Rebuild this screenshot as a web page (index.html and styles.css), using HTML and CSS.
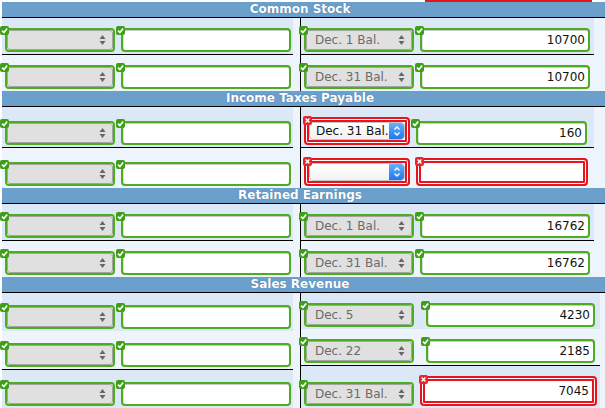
FILE: index.html
```html
<!DOCTYPE html>
<html lang="en">
<head>
    <meta charset="UTF-8">
    <title>T-Accounts</title>
    <link rel="stylesheet" href="styles.css">
</head>
<body>

    <svg width="0" height="0" class="defs">
        <symbol id="ok" viewBox="0 0 9 9">
            <rect width="9" height="9" rx="2" fill="#3e9e17"/>
            <path d="M2 4.6 L3.9 6.5 L7.2 2.4" fill="none" stroke="#fff" stroke-width="1.6"/>
        </symbol>
        <symbol id="bad" viewBox="0 0 9 9">
            <rect width="9" height="9" rx="2" fill="#e4272d"/>
            <path d="M2.6 2.6 L6.4 6.4 M6.4 2.6 L2.6 6.4" fill="none" stroke="#fff" stroke-width="1.4"/>
        </symbol>
        <symbol id="arrows" viewBox="0 0 7 12">
            <path d="M0.5 5 L3.5 1 L6.5 5 Z M0.5 7 L3.5 11 L6.5 7 Z" fill="#666"/>
        </symbol>
        <symbol id="chev" viewBox="0 0 8 12">
            <path d="M1.5 4.5 L4 2 L6.5 4.5 M1.5 7.5 L4 10 L6.5 7.5" fill="none" stroke="#fff" stroke-width="1.3"/>
        </symbol>
    </svg>

    <div class="prev"><div class="prev-bar"></div></div>

    <!-- Common Stock -->
    <div class="acct">
        <div class="head">Common Stock</div>
        <div class="body">
            <div class="col left">
                <div class="row line">
                    <div class="fld sel"><svg class="mark"><use href="#ok"/></svg><div class="pick"><span></span><svg class="arr"><use href="#arrows"/></svg></div></div>
                    <div class="fld txt"><svg class="mark"><use href="#ok"/></svg><div class="val"></div></div>
                </div>
                <div class="row alt">
                    <div class="fld sel"><svg class="mark"><use href="#ok"/></svg><div class="pick"><span></span><svg class="arr"><use href="#arrows"/></svg></div></div>
                    <div class="fld txt"><svg class="mark"><use href="#ok"/></svg><div class="val"></div></div>
                </div>
            </div>
            <div class="col right">
                <div class="row line">
                    <div class="fld sel"><svg class="mark"><use href="#ok"/></svg><div class="pick"><span>Dec. 1 Bal.</span><svg class="arr"><use href="#arrows"/></svg></div></div>
                    <div class="fld txt"><svg class="mark"><use href="#ok"/></svg><div class="val">10700</div></div>
                </div>
                <div class="row alt">
                    <div class="fld sel"><svg class="mark"><use href="#ok"/></svg><div class="pick"><span>Dec. 31 Bal.</span><svg class="arr"><use href="#arrows"/></svg></div></div>
                    <div class="fld txt"><svg class="mark"><use href="#ok"/></svg><div class="val">10700</div></div>
                </div>
            </div>
        </div>
    </div>

    <!-- Income Taxes Payable -->
    <div class="acct">
        <div class="head">Income Taxes Payable</div>
        <div class="body">
            <div class="col left">
                <div class="row line">
                    <div class="fld sel"><svg class="mark"><use href="#ok"/></svg><div class="pick"><span></span><svg class="arr"><use href="#arrows"/></svg></div></div>
                    <div class="fld txt"><svg class="mark"><use href="#ok"/></svg><div class="val"></div></div>
                </div>
                <div class="row alt">
                    <div class="fld sel"><svg class="mark"><use href="#ok"/></svg><div class="pick"><span></span><svg class="arr"><use href="#arrows"/></svg></div></div>
                    <div class="fld txt"><svg class="mark"><use href="#ok"/></svg><div class="val"></div></div>
                </div>
            </div>
            <div class="col right">
                <div class="row line">
                    <div class="fld bad bsel"><svg class="mark"><use href="#bad"/></svg><div class="native"><span>Dec. 31 Bal.</span><div class="blue"><svg class="chev"><use href="#chev"/></svg></div></div></div>
                    <div class="fld txt slim"><svg class="mark"><use href="#ok"/></svg><div class="val">160</div></div>
                </div>
                <div class="row alt">
                    <div class="fld bad bsel"><svg class="mark"><use href="#bad"/></svg><div class="native"><span></span><div class="blue"><svg class="chev"><use href="#chev"/></svg></div></div></div>
                    <div class="fld bad btxt"><svg class="mark"><use href="#bad"/></svg><div class="val"></div></div>
                </div>
            </div>
        </div>
    </div>

    <!-- Retained Earnings -->
    <div class="acct">
        <div class="head">Retained Earnings</div>
        <div class="body">
            <div class="col left">
                <div class="row line">
                    <div class="fld sel"><svg class="mark"><use href="#ok"/></svg><div class="pick"><span></span><svg class="arr"><use href="#arrows"/></svg></div></div>
                    <div class="fld txt"><svg class="mark"><use href="#ok"/></svg><div class="val"></div></div>
                </div>
                <div class="row alt">
                    <div class="fld sel"><svg class="mark"><use href="#ok"/></svg><div class="pick"><span></span><svg class="arr"><use href="#arrows"/></svg></div></div>
                    <div class="fld txt"><svg class="mark"><use href="#ok"/></svg><div class="val"></div></div>
                </div>
            </div>
            <div class="col right">
                <div class="row line">
                    <div class="fld sel"><svg class="mark"><use href="#ok"/></svg><div class="pick"><span>Dec. 1 Bal.</span><svg class="arr"><use href="#arrows"/></svg></div></div>
                    <div class="fld txt"><svg class="mark"><use href="#ok"/></svg><div class="val">16762</div></div>
                </div>
                <div class="row alt">
                    <div class="fld sel"><svg class="mark"><use href="#ok"/></svg><div class="pick"><span>Dec. 31 Bal.</span><svg class="arr"><use href="#arrows"/></svg></div></div>
                    <div class="fld txt"><svg class="mark"><use href="#ok"/></svg><div class="val">16762</div></div>
                </div>
            </div>
        </div>
    </div>

    <!-- Sales Revenue -->
    <div class="acct">
        <div class="head">Sales Revenue</div>
        <div class="body">
            <div class="col left">
                <div class="row">
                    <div class="fld sel"><svg class="mark"><use href="#ok"/></svg><div class="pick"><span></span><svg class="arr"><use href="#arrows"/></svg></div></div>
                    <div class="fld txt"><svg class="mark"><use href="#ok"/></svg><div class="val"></div></div>
                </div>
                <div class="row alt line">
                    <div class="fld sel"><svg class="mark"><use href="#ok"/></svg><div class="pick"><span></span><svg class="arr"><use href="#arrows"/></svg></div></div>
                    <div class="fld txt"><svg class="mark"><use href="#ok"/></svg><div class="val"></div></div>
                </div>
                <div class="row">
                    <div class="fld sel"><svg class="mark"><use href="#ok"/></svg><div class="pick"><span></span><svg class="arr"><use href="#arrows"/></svg></div></div>
                    <div class="fld txt"><svg class="mark"><use href="#ok"/></svg><div class="val"></div></div>
                </div>
            </div>
            <div class="col right">
                <div class="row wide">
                    <div class="fld sel"><svg class="mark"><use href="#ok"/></svg><div class="pick"><span>Dec. 5</span><svg class="arr"><use href="#arrows"/></svg></div></div>
                    <div class="fld txt push"><svg class="mark"><use href="#ok"/></svg><div class="val">4230</div></div>
                </div>
                <div class="row wide alt line">
                    <div class="fld sel"><svg class="mark"><use href="#ok"/></svg><div class="pick"><span>Dec. 22</span><svg class="arr"><use href="#arrows"/></svg></div></div>
                    <div class="fld txt push"><svg class="mark"><use href="#ok"/></svg><div class="val">2185</div></div>
                </div>
                <div class="row wide">
                    <div class="fld sel"><svg class="mark"><use href="#ok"/></svg><div class="pick"><span>Dec. 31 Bal.</span><svg class="arr"><use href="#arrows"/></svg></div></div>
                    <div class="fld bad btxt tall"><svg class="mark"><use href="#bad"/></svg><div class="val">7045</div></div>
                </div>
            </div>
        </div>
    </div>

</body>
</html>
```

FILE: styles.css
```css
html, body {
    margin: 0;
    background: #fff;
    overflow: hidden;
}

body {
    padding-left: 2px;
    font-family: "DejaVu Sans", Verdana, sans-serif;
    font-size: 12px;
}

.defs {
    position: absolute;
}

.prev {
    height: 2px;
}

.prev-bar {
    margin-left: 423px;
    width: 167px;
    height: 2px;
    background: #e8141c;
}

.head {
    height: 15px;
    line-height: 15px;
    padding-right: 7px;
    background: #6b9fcc;
    border-bottom: 1px solid #000;
    color: #fff;
    font-weight: bold;
    text-align: center;
    text-shadow: 0 0 1px #3f6791;
}

.body {
    display: flex;
}

.col {
    display: flex;
    flex-direction: column;
    background: #eef4fc;
}

.col.left {
    width: 298px;
    border-right: 1px solid #000;
}

.col.right {
    flex: 1;
}

.row {
    flex: 1;
    display: flex;
    align-items: flex-end;
    gap: 6px;
    width: 291px;
    box-sizing: border-box;
    padding: 10px 0 2px 3px;
    background: #dde8f6;
}

.col.right .row {
    width: 293px;
}

.col.right .row.wide {
    width: 299px;
}

.row.alt {
    background: #eef4fc;
}

.row.line {
    border-bottom: 1px solid #000;
}

/* fields */

.fld {
    position: relative;
    flex: none;
    height: 24px;
    box-sizing: border-box;
    border: 2px solid #4cae1f;
    border-radius: 4px;
    background: #fff;
    white-space: nowrap;
}

.mark {
    position: absolute;
    left: -7px;
    top: -4px;
    width: 9px;
    height: 9px;
    z-index: 2;
}

.sel {
    width: 110px;
}

.pick {
    display: flex;
    align-items: center;
    justify-content: space-between;
    height: 100%;
    box-sizing: border-box;
    padding: 0 6px 0 8px;
    background: #e0e0e0;
    border: 1px solid #a3a3a3;
    border-radius: 3px;
    color: #6b6b6b;
}

.arr {
    flex: none;
    width: 7px;
    height: 12px;
}

.txt {
    width: 170px;
    box-shadow: inset 0 1px 0 #c9c9c9, inset 1px 0 0 #dedede;
}

.txt.slim {
    width: 171px;
}

.txt.push {
    width: 169px;
    margin-left: 6px;
}

.val {
    height: 100%;
    padding-right: 3px;
    display: flex;
    align-items: center;
    justify-content: flex-end;
    color: #111;
}

/* invalid fields: double red frame */

.bad {
    height: 28px;
    padding: 3px;
    border-color: #e8141c;
    box-shadow: inset 0 0 0 1px #fff, inset 0 0 0 3px #e8141c;
}

.bad .mark {
    left: -3px;
    top: -3px;
}

.bsel {
    width: 106px;
}

.btxt {
    width: 172px;
}

.btxt.tall {
    width: 177px;
    height: 30px;
}

.btxt .val {
    padding-right: 3px;
}

.native {
    display: flex;
    align-items: center;
    justify-content: space-between;
    height: 100%;
    box-sizing: border-box;
    padding-left: 6px;
    overflow: hidden;
    background: linear-gradient(#fff, #f2f2f2);
    border: 1px solid #c4c4c4;
    border-radius: 4px;
    color: #111;
}

.blue {
    display: flex;
    flex: none;
    align-items: center;
    justify-content: center;
    width: 15px;
    height: 100%;
    background: linear-gradient(#68b0fb, #1f77ef);
    border-radius: 0 3px 3px 0;
}

.chev {
    width: 8px;
    height: 12px;
}
```
